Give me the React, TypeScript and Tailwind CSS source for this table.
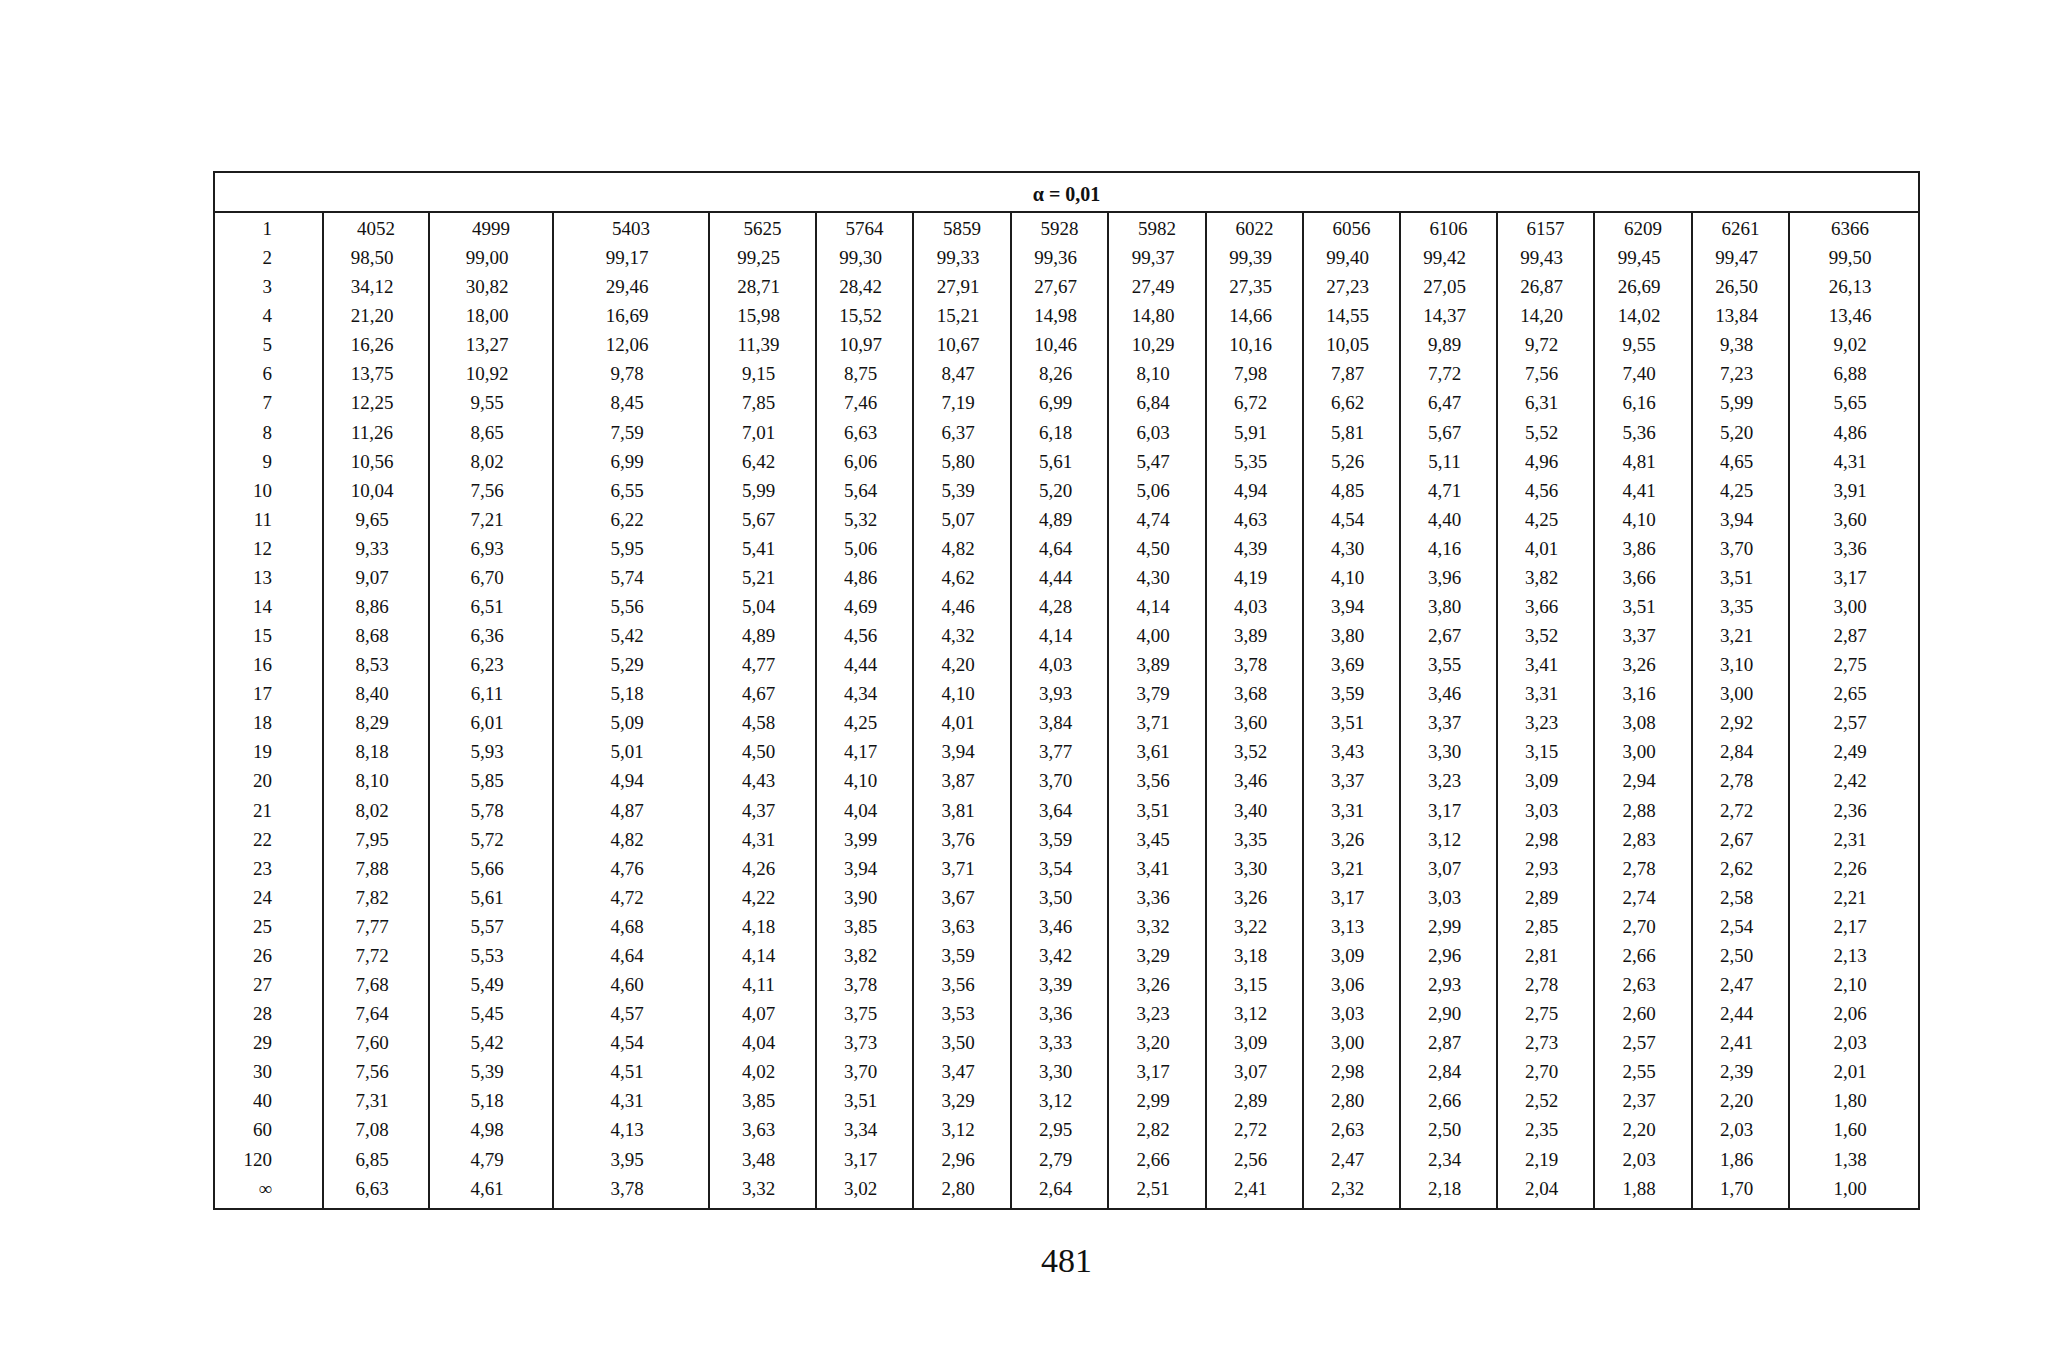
const colWidths = [
  'w-[107px]', 'w-[106px]', 'w-[124px]', 'w-[156px]', 'w-[107px]', 'w-[97px]', 'w-[98px]', 'w-[97px]',
  'w-[98px]', 'w-[97px]', 'w-[97px]', 'w-[97px]', 'w-[97px]', 'w-[98px]', 'w-[97px]', 'w-[130px]',
];

// rows of the F table, alpha = 0.01; first value is the row label
const rows = [
  '1 4052 4999 5403 5625 5764 5859 5928 5982 6022 6056 6106 6157 6209 6261 6366',
  '2 98,50 99,00 99,17 99,25 99,30 99,33 99,36 99,37 99,39 99,40 99,42 99,43 99,45 99,47 99,50',
  '3 34,12 30,82 29,46 28,71 28,42 27,91 27,67 27,49 27,35 27,23 27,05 26,87 26,69 26,50 26,13',
  '4 21,20 18,00 16,69 15,98 15,52 15,21 14,98 14,80 14,66 14,55 14,37 14,20 14,02 13,84 13,46',
  '5 16,26 13,27 12,06 11,39 10,97 10,67 10,46 10,29 10,16 10,05 9,89 9,72 9,55 9,38 9,02',
  '6 13,75 10,92 9,78 9,15 8,75 8,47 8,26 8,10 7,98 7,87 7,72 7,56 7,40 7,23 6,88',
  '7 12,25 9,55 8,45 7,85 7,46 7,19 6,99 6,84 6,72 6,62 6,47 6,31 6,16 5,99 5,65',
  '8 11,26 8,65 7,59 7,01 6,63 6,37 6,18 6,03 5,91 5,81 5,67 5,52 5,36 5,20 4,86',
  '9 10,56 8,02 6,99 6,42 6,06 5,80 5,61 5,47 5,35 5,26 5,11 4,96 4,81 4,65 4,31',
  '10 10,04 7,56 6,55 5,99 5,64 5,39 5,20 5,06 4,94 4,85 4,71 4,56 4,41 4,25 3,91',
  '11 9,65 7,21 6,22 5,67 5,32 5,07 4,89 4,74 4,63 4,54 4,40 4,25 4,10 3,94 3,60',
  '12 9,33 6,93 5,95 5,41 5,06 4,82 4,64 4,50 4,39 4,30 4,16 4,01 3,86 3,70 3,36',
  '13 9,07 6,70 5,74 5,21 4,86 4,62 4,44 4,30 4,19 4,10 3,96 3,82 3,66 3,51 3,17',
  '14 8,86 6,51 5,56 5,04 4,69 4,46 4,28 4,14 4,03 3,94 3,80 3,66 3,51 3,35 3,00',
  '15 8,68 6,36 5,42 4,89 4,56 4,32 4,14 4,00 3,89 3,80 2,67 3,52 3,37 3,21 2,87',
  '16 8,53 6,23 5,29 4,77 4,44 4,20 4,03 3,89 3,78 3,69 3,55 3,41 3,26 3,10 2,75',
  '17 8,40 6,11 5,18 4,67 4,34 4,10 3,93 3,79 3,68 3,59 3,46 3,31 3,16 3,00 2,65',
  '18 8,29 6,01 5,09 4,58 4,25 4,01 3,84 3,71 3,60 3,51 3,37 3,23 3,08 2,92 2,57',
  '19 8,18 5,93 5,01 4,50 4,17 3,94 3,77 3,61 3,52 3,43 3,30 3,15 3,00 2,84 2,49',
  '20 8,10 5,85 4,94 4,43 4,10 3,87 3,70 3,56 3,46 3,37 3,23 3,09 2,94 2,78 2,42',
  '21 8,02 5,78 4,87 4,37 4,04 3,81 3,64 3,51 3,40 3,31 3,17 3,03 2,88 2,72 2,36',
  '22 7,95 5,72 4,82 4,31 3,99 3,76 3,59 3,45 3,35 3,26 3,12 2,98 2,83 2,67 2,31',
  '23 7,88 5,66 4,76 4,26 3,94 3,71 3,54 3,41 3,30 3,21 3,07 2,93 2,78 2,62 2,26',
  '24 7,82 5,61 4,72 4,22 3,90 3,67 3,50 3,36 3,26 3,17 3,03 2,89 2,74 2,58 2,21',
  '25 7,77 5,57 4,68 4,18 3,85 3,63 3,46 3,32 3,22 3,13 2,99 2,85 2,70 2,54 2,17',
  '26 7,72 5,53 4,64 4,14 3,82 3,59 3,42 3,29 3,18 3,09 2,96 2,81 2,66 2,50 2,13',
  '27 7,68 5,49 4,60 4,11 3,78 3,56 3,39 3,26 3,15 3,06 2,93 2,78 2,63 2,47 2,10',
  '28 7,64 5,45 4,57 4,07 3,75 3,53 3,36 3,23 3,12 3,03 2,90 2,75 2,60 2,44 2,06',
  '29 7,60 5,42 4,54 4,04 3,73 3,50 3,33 3,20 3,09 3,00 2,87 2,73 2,57 2,41 2,03',
  '30 7,56 5,39 4,51 4,02 3,70 3,47 3,30 3,17 3,07 2,98 2,84 2,70 2,55 2,39 2,01',
  '40 7,31 5,18 4,31 3,85 3,51 3,29 3,12 2,99 2,89 2,80 2,66 2,52 2,37 2,20 1,80',
  '60 7,08 4,98 4,13 3,63 3,34 3,12 2,95 2,82 2,72 2,63 2,50 2,35 2,20 2,03 1,60',
  '120 6,85 4,79 3,95 3,48 3,17 2,96 2,79 2,66 2,56 2,47 2,34 2,19 2,03 1,86 1,38',
  '∞ 6,63 4,61 3,78 3,32 3,02 2,80 2,64 2,51 2,41 2,32 2,18 2,04 1,88 1,70 1,00',
].map((r) => r.split(' '));

export default function App() {
  return (
    <div className="w-[2048px] h-[1365px] bg-white pt-[171px] pl-[213px] font-['Liberation_Serif',serif] text-[#111]">
      <div className="w-[1707px] border-2 border-[#1c1c1c]">
        <div className="h-[40px] border-b-2 border-[#1c1c1c] pt-[4px] text-center text-[20px] font-bold leading-[34px]">
          α = 0,01
        </div>
        <div className="flex">
          {colWidths.map((w, c) => (
            <div
              key={c}
              className={`${w} shrink-0 pt-[1px] pb-[5px] ${c > 0 ? 'border-l-2 border-[#1c1c1c]' : ''}`}
            >
              {rows.map((row, r) => {
                const value = row[c];
                let align = 'text-center';
                if (c === 0) align = 'text-right pr-[50px]';
                else if (value.includes(',') || c === 15) align = 'text-center pr-2';
                return (
                  <div key={r} className={`h-[29.09px] text-[19px] leading-[29.09px] whitespace-nowrap ${align}`}>
                    {value}
                  </div>
                );
              })}
            </div>
          ))}
        </div>
      </div>
      <div className="w-[1707px] mt-[34px] text-center text-[34px] leading-[34px]">481</div>
    </div>
  );
}
